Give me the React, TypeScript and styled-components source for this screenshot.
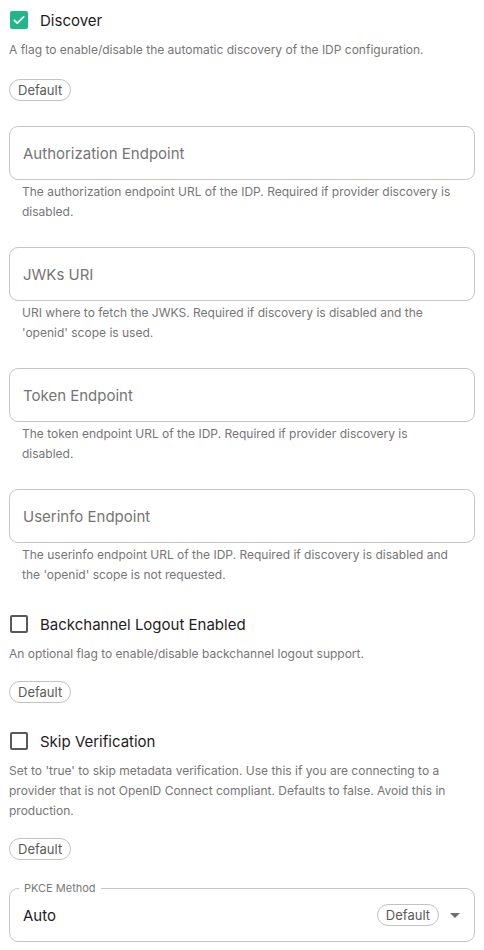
import React from "react";
import styled, { createGlobalStyle } from "styled-components";

const Global = createGlobalStyle`
  html, body { margin: 0; padding: 0; background: #fff; }
  body { font-family: Inter, "Noto Sans", Roboto, sans-serif; -webkit-font-smoothing: antialiased; }
  * { box-sizing: border-box; }
`;

const Page = styled.div`
  width: 484px;
  padding: 0 9px;
  display: flex;
  flex-direction: column;
`;

const CheckRow = styled.label<{ $mt?: number }>`
  display: flex;
  align-items: center;
  height: 40px;
  margin-top: ${(p) => p.$mt ?? 0}px;
  gap: 12px;
  padding-left: 1px;
  font-size: 15px;
  color: #1d1d1d;
`;

const Box = styled.span<{ $checked?: boolean }>`
  width: 18px;
  height: 18px;
  border-radius: 2px;
  flex: none;
  display: flex;
  align-items: center;
  justify-content: center;
  background: ${(p) => (p.$checked ? "#21b58a" : "#fff")};
  border: ${(p) => (p.$checked ? "none" : "2px solid #595959")};
`;

const Desc = styled.div<{ $indent?: boolean }>`
  font-size: 12px;
  line-height: 20px;
  color: #767676;
  padding-left: ${(p) => (p.$indent ? "13px" : "0")};
  padding-right: ${(p) => (p.$indent ? "13px" : "0")};
`;

const Chip = styled.span<{ $mt?: number; $inline?: boolean }>`
  display: inline-flex;
  align-items: center;
  align-self: ${(p) => (p.$inline ? "center" : "flex-start")};
  height: 22px;
  padding: 0 8px;
  margin-top: ${(p) => p.$mt ?? 0}px;
  border: 1px solid #c2c2c2;
  border-radius: 11px;
  font-size: 13px;
  color: #5a5a5a;
  background: #fff;
`;

const Field = styled.div<{ $mt: number }>`
  display: flex;
  flex-direction: column;
  margin-top: ${(p) => p.$mt}px;
`;

const Input = styled.input`
  height: 54px;
  width: 100%;
  border: 1px solid #c6c6c6;
  border-radius: 9px;
  padding: 0 13px;
  font-family: inherit;
  font-size: 15px;
  color: #222;
  outline: none;
  &::placeholder { color: #757575; }
`;

const HelperWrap = styled.div`
  margin-top: 2px;
`;

const Fieldset = styled.fieldset`
  margin: 22px 0 0;
  padding: 0 14px 0 13px;
  border: 1px solid #c6c6c6;
  border-radius: 9px;
  min-width: 0;
`;

const Legend = styled.legend`
  font-size: 11px;
  line-height: 13px;
  color: #7a7a7a;
  padding: 0 5px;
  margin-left: -4px;
`;

const SelectInner = styled.div`
  height: 46px;
  display: flex;
  align-items: center;
  padding-bottom: 6px;
  font-size: 15px;
  color: #222;
`;

const Value = styled.span`
  flex: 1;
`;

const Arrow = styled.span`
  margin-left: 11px;
  width: 0;
  height: 0;
  border-left: 5px solid transparent;
  border-right: 5px solid transparent;
  border-top: 5px solid #6e6e6e;
`;

const Check = () => (
  <svg width="14" height="14" viewBox="0 0 24 24" fill="none">
    <path d="M4 12.5l5 5L20 6.5" stroke="#fff" strokeWidth="3" strokeLinecap="round" strokeLinejoin="round" />
  </svg>
);

const fields = [
  {
    name: "Authorization Endpoint",
    help: "The authorization endpoint URL of the IDP. Required if provider discovery is disabled.",
  },
  {
    name: "JWKs URI",
    help: "URI where to fetch the JWKS. Required if discovery is disabled and the 'openid' scope is used.",
  },
  {
    name: "Token Endpoint",
    help: "The token endpoint URL of the IDP. Required if provider discovery is disabled.",
  },
  {
    name: "Userinfo Endpoint",
    help: "The userinfo endpoint URL of the IDP. Required if discovery is disabled and the 'openid' scope is not requested.",
  },
];

export default function App() {
  return (
    <>
      <Global />
      <Page>
        <CheckRow>
          <Box $checked>
            <Check />
          </Box>
          Discover
        </CheckRow>
        <Desc>A flag to enable/disable the automatic discovery of the IDP configuration.</Desc>
        <Chip $mt={19}>Default</Chip>

        {fields.map((f) => (
          <Field key={f.name} $mt={25}>
            <Input placeholder={f.name} readOnly />
            <HelperWrap>
              <Desc $indent>{f.help}</Desc>
            </HelperWrap>
          </Field>
        ))}

        <CheckRow $mt={19}>
          <Box />
          Backchannel Logout Enabled
        </CheckRow>
        <Desc>An optional flag to enable/disable backchannel logout support.</Desc>
        <Chip $mt={17}>Default</Chip>

        <CheckRow $mt={18}>
          <Box />
          Skip Verification
        </CheckRow>
        <Desc>
          Set to 'true' to skip metadata verification. Use this if you are connecting to a provider that is not
          OpenID Connect compliant. Defaults to false. Avoid this in production.
        </Desc>
        <Chip $mt={17}>Default</Chip>

        <Fieldset>
          <Legend>PKCE Method</Legend>
          <SelectInner>
            <Value>Auto</Value>
            <Chip $inline>Default</Chip>
            <Arrow />
          </SelectInner>
        </Fieldset>
      </Page>
    </>
  );
}
